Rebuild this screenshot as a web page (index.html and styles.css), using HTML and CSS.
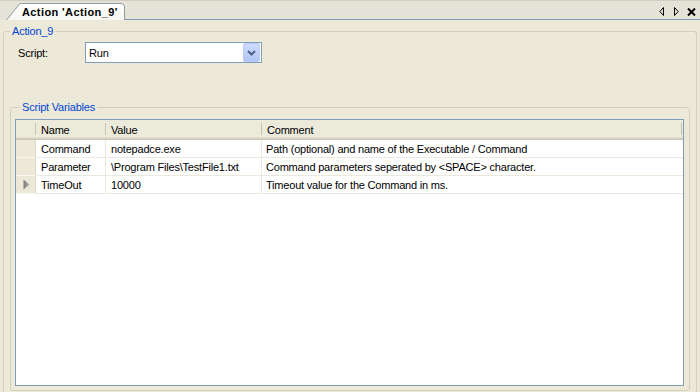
FILE: index.html
```html
<!DOCTYPE html>
<html>
<head>
<meta charset="utf-8">
<title>Action 'Action_9'</title>
<link rel="stylesheet" href="styles.css">
</head>
<body>
<div class="tabstrip">
  <div class="tab-lead"></div>
  <div class="tab">
    <svg class="tab-shape" width="120" height="17" viewBox="0 0 120 17">
      <defs>
        <linearGradient id="tabg" x1="0" y1="0" x2="0" y2="1">
          <stop offset="0" stop-color="#ffffff"/>
          <stop offset="1" stop-color="#f7f6f1"/>
        </linearGradient>
      </defs>
      <path d="M1.5 17 L14.2 1.6 Q15 0.5 16.5 0.5 L116 0.5 Q119.5 0.5 119.5 4 L119.5 17 Z" fill="url(#tabg)" stroke="none"/>
      <path d="M1.5 17 L14.2 1.6 Q15 0.5 16.5 0.5 L116 0.5 Q119.5 0.5 119.5 4 L119.5 17" fill="none" stroke="#919b9c"/>
    </svg>
    <span class="tab-label">Action 'Action_9'</span>
  </div>
  <div class="strip-rest">
    <svg class="nav-left" width="5" height="9" viewBox="0 0 5 9"><path d="M4.5 0.5 L0.8 4.5 L4.5 8.5 Z" fill="none" stroke="#000"/></svg>
    <svg class="nav-right" width="5" height="9" viewBox="0 0 5 9"><path d="M0.5 0.5 L4.2 4.5 L0.5 8.5 Z" fill="none" stroke="#000"/></svg>
    <svg class="nav-close" width="9" height="8" viewBox="0 0 9 8"><path d="M1 0.5 L8 7.5 M8 0.5 L1 7.5" stroke="#000" stroke-width="2"/></svg>
  </div>
</div>

<fieldset class="group outer">
  <legend class="group-title outer-title">Action_9</legend>
  <div class="field-row">
    <span class="field-label">Script:</span>
    <div class="combo">
      <span class="combo-text">Run</span>
      <span class="combo-btn">
        <svg width="9" height="6" viewBox="0 0 9 6"><path d="M1 1 L4.5 4.5 L8 1" fill="none" stroke="#4d6185" stroke-width="2"/></svg>
      </span>
    </div>
  </div>

  <fieldset class="group inner">
    <legend class="group-title inner-title">Script Variables</legend>
    <div class="grid">
      <div class="grid-head">
        <div class="hcell"></div>
        <div class="hcell">Name</div>
        <div class="hcell">Value</div>
        <div class="hcell hlast">Comment</div>
      </div>
      <div class="grid-row">
        <div class="rowhead"></div>
        <div class="cell">Command</div>
        <div class="cell">notepadce.exe</div>
        <div class="cell clast">Path (optional) and name of the Executable / Command</div>
      </div>
      <div class="grid-row">
        <div class="rowhead"></div>
        <div class="cell">Parameter</div>
        <div class="cell">\Program Files\TestFile1.txt</div>
        <div class="cell clast">Command parameters seperated by &lt;SPACE&gt; character.</div>
      </div>
      <div class="grid-row">
        <div class="rowhead current">
          <svg width="7" height="11" viewBox="0 0 7 11">
            <defs>
              <linearGradient id="arr" x1="0" y1="0" x2="1" y2="0">
                <stop offset="0" stop-color="#7d7d7d"/>
                <stop offset="1" stop-color="#b0b0b0"/>
              </linearGradient>
            </defs>
            <path d="M0.5 0.5 L6.5 5.5 L0.5 10.5 Z" fill="url(#arr)"/>
          </svg>
        </div>
        <div class="cell">TimeOut</div>
        <div class="cell">10000</div>
        <div class="cell clast">Timeout value for the Command in ms.</div>
      </div>
    </div>
  </fieldset>
</fieldset>
</body>
</html>
```

FILE: styles.css
```css
* {
  box-sizing: border-box;
}

html,
body {
  margin: 0;
  padding: 0;
}

body {
  width: 700px;
  height: 392px;
  overflow: hidden;
  background: #ece9d8;
  font-family: "Liberation Sans", Arial, sans-serif;
  font-size: 11px;
  letter-spacing: -0.2px;
  color: #000;
}

/* ---------- tab strip ---------- */
.tabstrip {
  display: flex;
  height: 20px;
  border-top: 1px solid #d2cfc2;
  background: #e5e3d7;
}

.tab-lead {
  width: 5px;
  height: 19px;
}

.tab {
  display: grid;
  width: 120px;
  height: 17px;
  align-self: flex-end;
}

.tab > * {
  grid-area: 1 / 1;
}

.tab-shape {
  display: block;
}

.tab-label {
  font-weight: bold;
  letter-spacing: 0.4px;
  padding-left: 17px;
  line-height: 18px;
  white-space: nowrap;
}

.strip-rest {
  flex: 1;
  height: 19px;
  border-bottom: 1px solid #7f9db9;
  display: flex;
  justify-content: flex-end;
  align-items: flex-start;
  padding-top: 6px;
  padding-right: 4px;
}

.strip-rest svg {
  display: block;
}

.nav-right {
  margin-left: 10px;
}

.nav-close {
  margin-left: 8px;
  margin-top: 1px;
}

/* ---------- group boxes ---------- */
.group {
  border: 1px solid #d0d0bf;
  border-radius: 3px;
  padding: 0;
  min-width: 0;
}

.group-title {
  color: #0046d5;
  padding: 0 2px;
  line-height: 13px;
}

.outer {
  margin: 5px 3px 0 3px;
  height: 380px;
}

.outer-title {
  margin-left: 6px;
}

.inner {
  margin: 38px 6px 0 6px;
  padding: 0 5px 4px 4px;
}

.inner-title {
  margin-left: 5px;
}

/* ---------- script row ---------- */
.field-row {
  display: flex;
  align-items: center;
  margin-top: 4px;
  padding-left: 14px;
}

.field-label {
  width: 67px;
}

.combo {
  width: 177px;
  height: 21px;
  border: 1px solid #7f9db9;
  background: #fff;
  display: flex;
  align-items: center;
  justify-content: space-between;
  padding: 0 1px 0 3px;
}

.combo-btn {
  width: 17px;
  height: 19px;
  border: 1px solid #bccbf3;
  border-radius: 2px;
  background: linear-gradient(#cddbfd, #b2c6f6);
  display: flex;
  align-items: center;
  justify-content: center;
}

.combo-btn svg {
  display: block;
}

/* ---------- grid ---------- */
.grid {
  margin-top: 5px;
  height: 267px;
  border: 1px solid #7f9db9;
  background: #fff;
}

.grid-head,
.grid-row {
  display: grid;
  grid-template-columns: 20px 70px 156px 1fr;
}

.grid-head {
  height: 20px;
  background: linear-gradient(to bottom,
      #ebeadb 0 17px,
      #e2decd 17px 18px,
      #d6d2c2 18px 19px,
      #cbc7b8 19px 20px);
}

.hcell {
  height: 17px;
  line-height: 16px;
  padding-top: 2px;
  padding-left: 5px;
  white-space: nowrap;
  background: linear-gradient(#c7c5b2, #c7c5b2) no-repeat right 0 top 3px / 1px 12px;
}

.hlast {
  background-position: right 1px top 3px;
}

.grid-row {
  height: 18px;
}

.rowhead {
  background: #ece9d8;
  border-bottom: 1px solid #f8f7f1;
  border-right: 1px solid #dcd9c9;
  display: flex;
  align-items: center;
  padding-left: 7px;
}

.rowhead svg {
  display: block;
}

.cell {
  line-height: 16px;
  padding-top: 1px;
  padding-left: 5px;
  border-bottom: 1px solid #ebe9dd;
  border-right: 1px solid #ebe9dd;
  white-space: nowrap;
  overflow: hidden;
}

.clast {
  padding-left: 4px;
  border-right: 0;
}
```
